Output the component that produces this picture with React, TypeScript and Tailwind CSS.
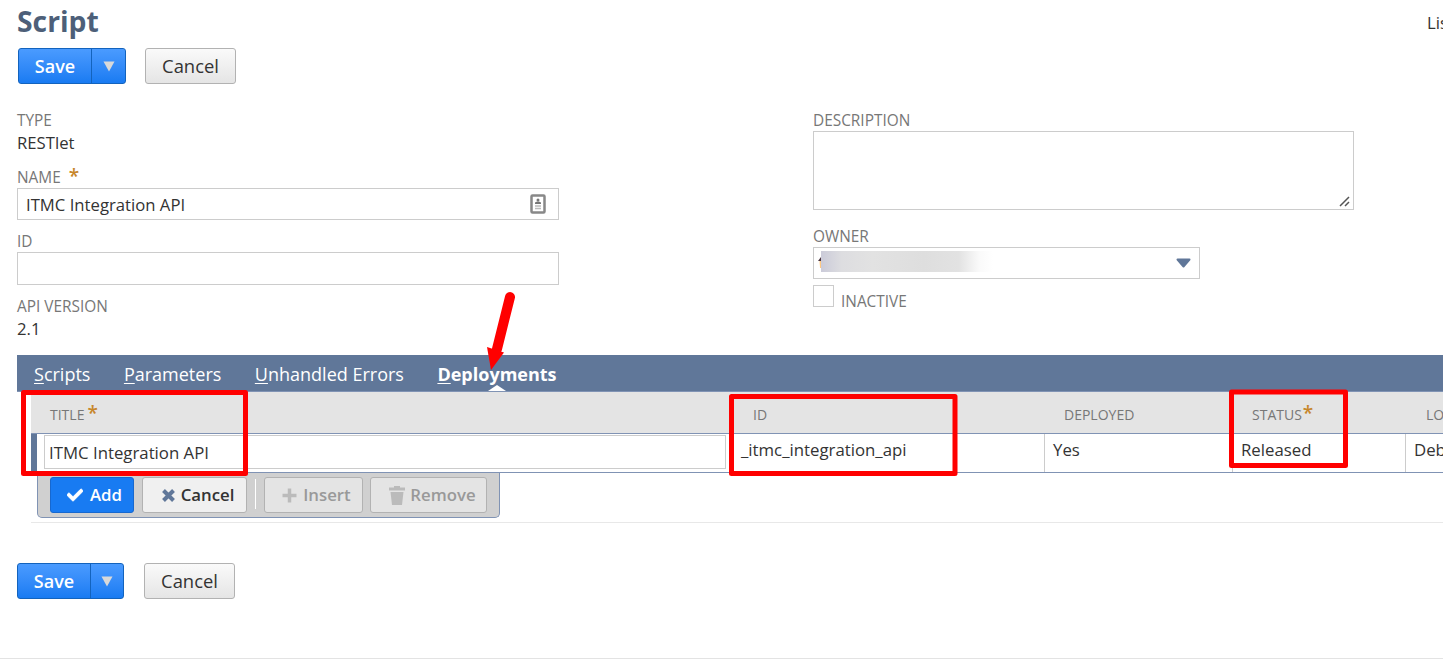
import type { ReactNode } from 'react'
import { FaCheck } from 'react-icons/fa'

interface Tab {
  hotkey: string
  rest: string
  active?: boolean
}

const tabs: Tab[] = [
  { hotkey: 'S', rest: 'cripts' },
  { hotkey: 'P', rest: 'arameters' },
  { hotkey: 'U', rest: 'nhandled Errors' },
  { hotkey: 'D', rest: 'eployments', active: true },
]

function Label({ children, required }: { children: ReactNode; required?: boolean }) {
  return (
    <div className="flex h-5 items-center pt-0.5 text-[15.4px] leading-5 text-[#777]">
      {children}
      {required && <Required className="ml-2" />}
    </div>
  )
}

function Required({ className = '' }: { className?: string }) {
  return (
    <span className={`-mt-1 text-[19px] font-semibold leading-5 text-[#c7862b] ${className}`}>*</span>
  )
}

function SaveBar({ compact }: { compact?: boolean }) {
  return (
    <div className="flex h-9">
      <div
        className={`flex rounded-[3px] border border-[#1363bd] bg-gradient-to-b from-[#4a9bff] to-[#187bf2] text-white ${
          compact ? 'w-[107px]' : 'w-[108px]'
        }`}
      >
        <button className="w-[72px] text-[18px] font-semibold">Save</button>
        <button className="flex flex-1 items-center justify-center border-l border-[#1363bd]">
          <svg width="12" height="11" viewBox="0 0 12 11">
            <path d="M0.5 0.5h11L6 10.5z" fill="#d9d9d9" />
          </svg>
        </button>
      </div>
      <button
        className={`w-[91px] rounded-[3px] border border-[#b2b2b2] bg-gradient-to-b from-[#fafafa] to-[#e5e5e5] text-[18.4px] font-medium leading-8 text-[#333] ${
          compact ? 'ml-5' : 'ml-[19px]'
        }`}
      >
        Cancel
      </button>
    </div>
  )
}

function MachineButtons() {
  return (
    <div className="ml-1.5 flex h-[45px] w-[463px] rounded-b-[5px] border border-t-0 border-[#8093b4] bg-[#d0d0d0] pl-3 pt-1 text-[16.8px] font-semibold">
      <button className="flex h-9 w-[84px] items-center justify-center gap-[7px] rounded-[3px] border border-[#1768cf] bg-[#187bf2] pl-[5px] text-white">
        <FaCheck size={16} stroke="currentColor" strokeWidth={30} />
        Add
      </button>
      <button className="ml-2 flex h-9 w-[105px] items-center justify-center gap-1.5 rounded-[3px] border border-[#b2b2b2] bg-[#f0f0f0] pl-[7px] text-[#333]">
        <svg width="13" height="13" viewBox="0 0 13 13" stroke="#607799" strokeWidth="4">
          <path d="M1.500 1.500L11.500 11.500M11.500 1.500L1.500 11.500" />
        </svg>
        Cancel
      </button>
      <div className="ml-2 mt-0.5 h-[30px] w-px bg-white" />
      <button className="ml-2 flex h-9 w-[99px] items-center justify-center gap-[6px] rounded-[3px] border border-[#b2b2b2] bg-[#e4e4e4] pl-1.5 text-[#999]">
        <svg width="15" height="15" viewBox="0 0 15 15" stroke="#bbb" strokeWidth="3.500">
          <path d="M7.500 0.500v14M0.500 7.500h14" />
        </svg>
        Insert
      </button>
      <button className="ml-[7px] flex h-9 w-[117px] items-center justify-center gap-[5px] rounded-[3px] border border-[#b2b2b2] bg-[#e4e4e4] pl-2 text-[#999]">
        <svg width="16" height="19" viewBox="0 0 16 19" fill="#bbb">
          <path d="M5 0h6v1.500h5v3H0v-3h5zM1.500 6h13L13 19H3z" />
        </svg>
        Remove
      </button>
    </div>
  )
}

// Red boxes and arrow drawn over the form
function Annotations() {
  return (
    <svg className="pointer-events-none absolute left-0 top-0" width="1443" height="659">
      <g fill="none" stroke="#f00" strokeWidth="5" strokeLinejoin="round">
        <rect x="23.5" y="392.5" width="222" height="81" />
        <rect x="731.5" y="396.5" width="223.5" height="77" />
        <rect x="1231.5" y="392" width="114" height="73.5" />
      </g>
      <path d="M510 297L497 349" stroke="#f00" strokeWidth="10" strokeLinecap="round" />
      <path d="M487 347L504 352.5L491 370z" fill="#f00" />
    </svg>
  )
}

export default function App() {
  return (
    <div className="relative h-[659px] w-[1443px] overflow-hidden border-b border-[#e3e3e3] bg-white pl-[17px] font-['Open_Sans',sans-serif] text-[16.7px] text-[#333]">
      <header className="flex h-12 justify-between pt-1">
        <h1 className="text-[28.3px] font-bold leading-[34px] text-[#4d5f79]">Script</h1>
        <div className="w-4 overflow-hidden whitespace-nowrap pt-[7px] leading-6 text-[#333]">List</div>
      </header>
      <div className="pl-px">
        <SaveBar />
      </div>

      <main className="flex h-[271px] pt-[26px]">
        <div className="w-[796px]">
          <Label>TYPE</Label>
          <div className="h-[37px] pt-px leading-6">RESTlet</div>
          <Label required>NAME</Label>
          <div className="mt-px flex h-8 w-[542px] items-center justify-between border border-[#ccc] pl-2 pr-3">
            <span className="pt-0.5">ITMC Integration API</span>
            <svg width="16" height="20" viewBox="0 0 16 20" fill="none">
              <rect x="1.500" y="1.500" width="13" height="17" rx="1" stroke="#888" strokeWidth="2.500" />
              <circle cx="8" cy="6" r="1.500" fill="#777" />
              <path d="M5 10V8.500Q8 6.500 11 8.500V10z" fill="#777" />
              <path d="M5 12h6M5 14.500h6" stroke="#bbb" strokeWidth="1.500" />
            </svg>
          </div>
          <div className="pt-[11px]">
            <Label>ID</Label>
          </div>
          <div className="mt-px h-[33px] w-[542px] border border-[#ccc]" />
          <div className="pt-[11px]">
            <Label>API VERSION</Label>
          </div>
          <div className="pt-px leading-6">2.1</div>
        </div>

        <div>
          <Label>DESCRIPTION</Label>
          <div className="mt-px flex h-[79px] w-[541px] items-end justify-end border border-[#ccc] pb-0.5 pr-[3px]">
            <svg width="11" height="11" viewBox="0 0 11 11" stroke="#555" strokeWidth="1.5">
              <path d="M1 10L10 1M6 10L10 6" />
            </svg>
          </div>
          <div className="pt-4">
            <Label>OWNER</Label>
          </div>
          <div className="mt-px flex h-8 w-[387px] items-center border border-[#ccc] pl-1 pr-2">
            <svg width="3" height="12" viewBox="0 0 3 12">
              <path d="M0 4L3 0V4z" fill="#4a3540" />
              <path d="M1.500 4H3v7H2z" fill="#ffc984" />
            </svg>
            <div className="-mt-[3px] h-[21px] w-[172px] bg-[linear-gradient(to_right,#cbcbd9_0%,#dddde0_12%,#e2e2e2_30%,#dedede_60%,#e2e2e2_80%,#fafafa_92%,#fff_100%)]" />
            <svg className="ml-auto" width="15" height="10" viewBox="0 0 15 10">
              <path
                d="M1.500 1.500h12L7.500 8.500z"
                fill="#607799"
                stroke="#607799"
                strokeWidth="2"
                strokeLinejoin="round"
              />
            </svg>
          </div>
          <div className="mt-1.5 flex">
            <div className="h-[22px] w-[21px] border border-[#ccc]" />
            <div className="ml-[7px] pt-1.5">
              <Label>INACTIVE</Label>
            </div>
          </div>
        </div>
      </main>

      <nav className="flex h-[37px] gap-[33.5px] border-b border-[#8093b4] bg-[#607799] pl-[17px] text-[18px] leading-[38px] text-white">
        {tabs.map((tab) => (
          <div key={tab.hotkey} className={tab.active ? 'relative font-bold' : ''}>
            <span className="underline underline-offset-2">{tab.hotkey}</span>
            {tab.rest}
            {tab.active && (
              <svg className="absolute bottom-0 left-[51px]" width="18" height="6" viewBox="0 0 18 6">
                <path d="M0 6L9 0L18 6z" fill="#fff" />
              </svg>
            )}
          </div>
        ))}
      </nav>

      <section className="ml-[14px] h-[131px] border-b border-[#e8e8e8]">
        <div className="flex h-[42px] items-center border-b border-[#8093b4] bg-[#e4e4e4] pt-1 text-[14px] text-[#777]">
          <div className="flex w-[702px] items-center pl-[19px]">
            TITLE
            <Required className="ml-[3px]" />
          </div>
          <div className="w-[312px] pl-5">ID</div>
          <div className="w-[187px] pl-[19px]">DEPLOYED</div>
          <div className="flex w-[174px] items-center pl-5">
            STATUS
            <Required className="ml-px" />
          </div>
          <div className="w-[37px] overflow-hidden whitespace-nowrap pl-5">LOG LEVEL</div>
        </div>
        <div className="flex h-[39px] border-b border-[#8093b4] text-[16.8px] leading-[32px]">
          <div className="w-1.5 bg-[#607799]" />
          <div className="w-[696px] pl-[7px] pt-px">
            <div className="h-[34px] w-[682px] border border-[#ccc] pl-1 leading-[33px]">
              ITMC Integration API
            </div>
          </div>
          <div className="w-[311px] pl-2">_itmc_integration_api</div>
          <div className="w-[188px] border-l border-[#ccc] pl-2">Yes</div>
          <div className="w-[173px] border-l border-[#ccc] pl-2">Released</div>
          <div className="w-[38px] overflow-hidden border-l border-[#ccc] pl-2">Debug</div>
        </div>
        <MachineButtons />
      </section>

      <div className="pt-10">
        <SaveBar compact />
      </div>
      <Annotations />
    </div>
  )
}
